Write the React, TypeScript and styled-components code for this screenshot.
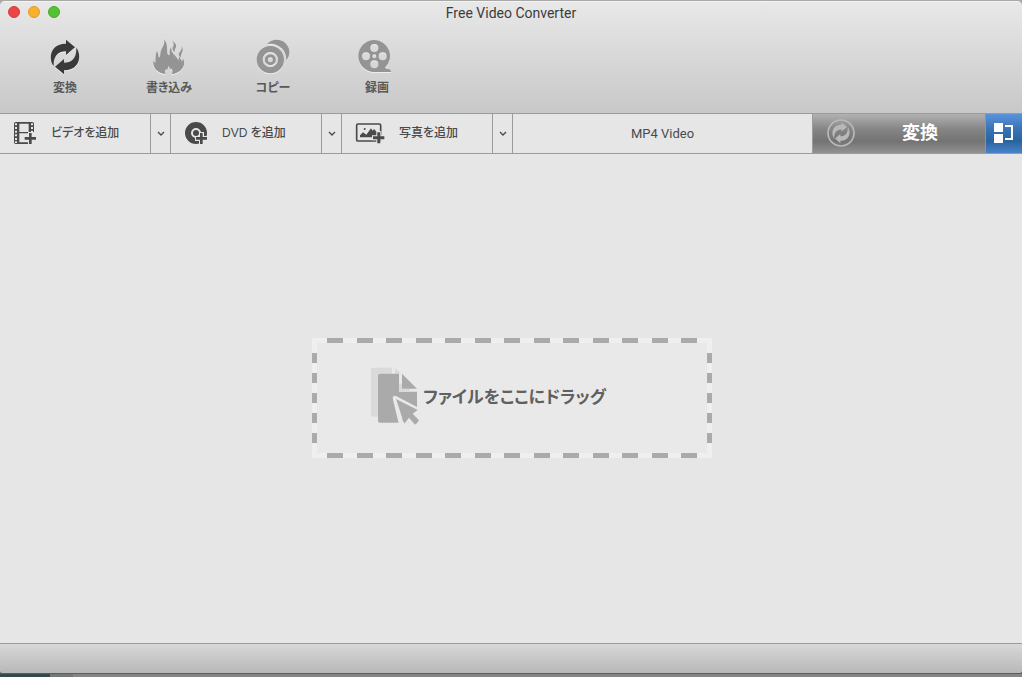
import React from "react";
import styled, { createGlobalStyle, css } from "styled-components";

const line = "#9b9b9b";
const ink = "#4a4a4a";

const GlobalStyle = createGlobalStyle`
  * { box-sizing: border-box; }
  body {
    margin: 0;
    background: #808281;
    color: ${ink};
    font-family: "Liberation Sans", "Noto Sans CJK JP", sans-serif;
    font-feature-settings: "palt";
  }
  button, select { font: inherit; color: inherit; font-feature-settings: inherit; }
  svg { display: block; flex: none; }
`;

const Desktop = styled.div`
  min-height: 100vh;
  display: flex;
  flex-direction: column;
  background: linear-gradient(#a9a9a9, #a9a9a9) top / 100% 4px no-repeat, #808281;
`;

const Window = styled.main`
  flex: 1;
  display: flex;
  flex-direction: column;
  margin-top: 1px;
  border-radius: 5px 5px 4px 4px;
  overflow: hidden;
  background: #e6e6e6;
`;

const DesktopEdge = styled.div`
  height: 4px;
  border-top: 1px solid #5b5e5d;
  background: linear-gradient(90deg, #34494d 50px, #767877 50px, #767877 73px, #858786 73px);
`;

const Header = styled.header`
  background: linear-gradient(#e8e8e8, #c8c8c8);
  border-top: 1px solid #f4f4f4;
  border-bottom: 1px solid ${line};
  height: 113px;
`;

const TitleBar = styled.div`
  display: grid;
  grid-template-columns: 1fr auto 1fr;
  align-items: center;
  height: 20px;
  padding: 0 8px;
`;

const Lights = styled.div`
  display: flex;
  gap: 8px;
`;

const Light = styled.button<{ $fill: string; $edge: string }>`
  width: 12px;
  height: 12px;
  padding: 0;
  border: 1px solid ${(p) => p.$edge};
  border-radius: 50%;
  background: ${(p) => p.$fill};
`;

const Title = styled.h1`
  margin: 0;
  padding-top: 2px;
  font-size: 14px;
  line-height: 18px;
  font-weight: 400;
  color: #3c3c3c;
  font-family: Roboto, sans-serif;
`;

const Modes = styled.nav`
  display: flex;
  padding: 17px 13px 0;
`;

const Mode = styled.button<{ $active?: boolean }>`
  display: flex;
  flex-direction: column;
  align-items: center;
  gap: 3px;
  width: 104px;
  padding: 0;
  border: 0;
  background: none;
  font-size: 12px;
  line-height: 20px;
  font-weight: 700;
  color: #585858;
  svg {
    color: ${(p) => (p.$active ? "#3a3a3a" : "#949494")};
    filter: drop-shadow(0 1px 0 #eeeeee);
  }
`;

const Toolbar = styled.div`
  display: flex;
  height: 40px;
  border-bottom: 1px solid ${line};
`;

const AddButton = styled.button`
  display: flex;
  align-items: center;
  gap: 14px;
  width: 151px;
  padding: 0 14px 2px 13px;
  border: 0;
  border-right: 1px solid ${line};
  background: none;
  font-size: 12px;
  line-height: 18px;
  font-weight: 500;
`;

const CaretButton = styled.button`
  display: grid;
  place-items: center;
  width: 20px;
  padding: 0;
  border: 0;
  border-right: 1px solid ${line};
  background: none;
`;

const FormatButton = styled.button`
  flex: 1;
  border: 0;
  border-right: 1px solid ${line};
  background: none;
  font-size: 13px;
  font-family: Roboto, sans-serif;
`;

const ConvertButton = styled.button`
  display: grid;
  grid-template-columns: 28px 1fr;
  align-items: center;
  width: 173px;
  padding: 0 0 2px 14px;
  border: 0;
  border-right: 1px solid #8f9397;
  background: linear-gradient(#b2b2b2, #868686 38%, #737373 70%, #929292);
  color: #fff;
  font-size: 18px;
  line-height: 24px;
  font-weight: 700;
`;

const PanelButton = styled.button`
  display: grid;
  place-items: center;
  width: 36px;
  padding: 0 0 2px;
  border: 0;
  background: linear-gradient(#5a93dc, #3a74b4 38%, #2a649f 70%, #4a82c8);
`;

const Stage = styled.section`
  flex: 1;
  display: grid;
  place-items: center;
  padding: 0 0 2px 2px;
`;

const DropZone = styled.div`
  display: grid;
  grid-template: 5px 1fr 5px / 5px 1fr 5px;
  width: 400px;
  height: 120px;
  background: #efefef;
`;

const DashLine = styled.div<{ $vertical?: boolean }>`
  display: flex;
  justify-content: space-between;
  ${(p) =>
    p.$vertical
      ? css`
          flex-direction: column;
          padding: 10px 0;
        `
      : css`
          grid-column: 1 / -1;
          padding: 0 15px;
        `}
`;

const Dash = styled.i<{ $vertical?: boolean }>`
  background: #aaa;
  width: ${(p) => (p.$vertical ? 5 : 16)}px;
  height: ${(p) => (p.$vertical ? 10 : 5)}px;
`;

const DropHint = styled.div`
  display: flex;
  align-items: center;
  gap: 2px;
  padding-left: 54px;
  background: #e9e9e9;
  font-size: 17px;
  line-height: 24px;
  font-weight: 700;
  color: #606060;
  white-space: nowrap;
`;

const StatusBar = styled.footer`
  height: 30px;
  border-top: 1px solid ${line};
  background: linear-gradient(#d8d8d8, #b8b8b8);
`;

const arrow = "M11 82C-5 62-2 14 48 14V2l27 23-27 23V37C25 37 10 50 11 82Z";

const Arrows = () => (
  <svg width="30" height="36" viewBox="0 0 90 108" fill="currentColor" aria-hidden>
    <path d={arrow} />
    <path d={arrow} transform="rotate(180 45 54)" />
  </svg>
);

const Flame = () => (
  <svg width="32" height="36" viewBox="0 0 96 108" fill="currentColor" aria-hidden>
    <path d="M33 1C46 17 41 33 43 43C45 50 49 51 50 45C50 37 49 31 55 24C53 38 60 43 67 51C72 57 74 60 76 64C79 60 77 55 80 51C81 60 85 62 87 68C89 66 88 63 91 60C98 76 90 98 62 105C57 106 56 104 58 99C60 94 56 90 54 88C53 90 53 92 51 93C50 88 49 85 47 81C45 86 43 90 43 95C41 93 40 91 39 90C36 95 34 99 38 105C13 103-1 86 1 66C3 68 5 70 8 71C6 58 9 47 11 36C17 43 15 52 18 56C23 53 21 46 23 39C26 25 37 19 33 1Z" />
    <path d="M56 4C62 10 71 13 69 23C68 31 62 33 67 41C56 34 58 28 61 22C64 15 61 10 56 4Z" />
    <path d="M85 21C93 32 88 38 86 43C84 48 84 51 85 55C75 50 76 44 81 38C86 33 87 28 85 21Z" />
  </svg>
);

const Discs = () => (
  <svg width="34" height="36" viewBox="0 0 102 108" fill="currentColor" aria-hidden>
    <defs>
      <mask id="disc-gap">
        <rect width="102" height="108" fill="#fff" />
        <circle cx="43" cy="62" r="48" fill="#000" />
      </mask>
    </defs>
    <circle cx="62" cy="40" r="38" mask="url(#disc-gap)" />
    <circle cx="43" cy="62" r="32" fill="none" stroke="currentColor" strokeWidth="18" />
    <circle cx="43" cy="62" r="12" fill="none" stroke="currentColor" strokeWidth="9" />
  </svg>
);

const Reel = () => (
  <svg width="34" height="36" viewBox="7 2 102 108" fill="currentColor" overflow="visible" aria-hidden>
    <path
      fillRule="evenodd"
      d="M50 5a48 48 0 0 1 32 83c4 5 10 4 14 5l5 8H50A48 48 0 0 1 50 5ZM50 17a12 12 0 1 0 0 24a12 12 0 1 0 0-24ZM25 42a12 12 0 1 0 0 24a12 12 0 1 0 0-24ZM75 42a12 12 0 1 0 0 24a12 12 0 1 0 0-24ZM50 66a12 12 0 1 0 0 24a12 12 0 1 0 0-24ZM50 48a6 6 0 1 0 0 12a6 6 0 1 0 0-12Z"
    />
  </svg>
);

const FilmAdd = () => (
  <svg width="24" height="24" viewBox="0 0 72 72" fill={ink} aria-hidden>
    <path
      fillRule="evenodd"
      d="M8 3H58Q63 3 63 8V69H8Q3 69 3 64V8Q3 3 8 3ZM6 7V13H12V7ZM6 18V24H12V18ZM6 29V35H12V29ZM6 40V46H12V40ZM6 51V57H12V51ZM6 61V66H12V61ZM19 8V33H47V8ZM19 37V64H47V37ZM54 7V13H60V7ZM54 18V24H60V18ZM54 29V35H60V29Z"
    />
    <path d="M32 45H45V33H66V45H72V72H45V60H32Z" fill="#e6e6e6" />
    <path d="M48 36h8v12h13v8H56v13h-8V56H35v-8h13Z" />
  </svg>
);

const DiscAdd = () => (
  <svg width="24" height="24" viewBox="0 0 72 72" fill={ink} aria-hidden>
    <circle cx="36" cy="36" r="24" fill="none" stroke={ink} strokeWidth="18" />
    <circle cx="36" cy="36" r="9" />
    <path d="M45 33H60V45H72V60H60V72H45V60H33V45H45Z" fill="#e6e6e6" />
    <path d="M48 36h8v12h13v8H56v13h-8V56H36v-8h12Z" />
  </svg>
);

const PictureAdd = () => (
  <svg width="30" height="24" viewBox="0 0 90 72" fill={ink} aria-hidden>
    <rect x="5" y="9" width="72" height="51" rx="4" fill="none" stroke={ink} strokeWidth="5" />
    <circle cx="29" cy="24" r="3" />
    <path d="M15 49V43L24 34L34 41L48 22L53 29L57 24L66 34V49Z" />
    <path d="M51 43H64V31H79V43H90V58H79V70H64V58H51Z" fill="#e6e6e6" />
    <path d="M67 34h9v12h12v9H76v12h-9V55H54v-9h13Z" />
  </svg>
);

const Caret = () => (
  <svg width="8" height="6" viewBox="0 0 8 6" fill="none" stroke={ink} strokeWidth="1.4" aria-hidden>
    <path d="M1 1l3 3 3-3" />
  </svg>
);

const ConvertBadge = () => (
  <svg width="28" height="28" viewBox="0 0 84 84" fill="#b9b9b9" aria-hidden>
    <circle cx="42" cy="42" r="39" fill="none" stroke="#b9b9b9" strokeWidth="5" />
    <g transform="translate(15 9) scale(.6)">
      <path d={arrow} />
      <path d={arrow} transform="rotate(180 45 54)" />
    </g>
  </svg>
);

const PanelIcon = () => (
  <svg width="20" height="20" viewBox="0 0 20 20" aria-hidden>
    <path fill="#fff" d="M0 0h9v9H0ZM0 11h9v9H0ZM11 2h8v15h-8v-2h6V4h-6Z" />
  </svg>
);

const FileDrag = () => (
  <svg width="50" height="60" viewBox="0 7 150 180" fill="#aaa" overflow="visible" aria-hidden>
    <path d="M6 6H63V24H27V153H6Q0 153 0 147V12Q0 6 6 6ZM72 6L90 24H72Z" fill="#dadada" />
    <path d="M27 24H84V78H138V171H27Q21 171 21 165V30Q21 24 27 24Z" />
    <path d="M84 54H93V69H117V78H84Z" fill="#dadada" />
    <path d="M93 24L138 69H93Z" />
    <path d="M72 97L142 134L129 145L150 169L136 184L114 160L99 176L93 185Z" stroke="#e9e9e9" strokeWidth="14" strokeLinejoin="round" />
    <path d="M75 100L140 133L125 144L144 164L132 177L114 156L100 174Z" />
  </svg>
);

const sources = [
  { label: "ビデオを追加", icon: <FilmAdd /> },
  { label: "DVD を追加", icon: <DiscAdd /> },
  { label: "写真を追加", icon: <PictureAdd /> },
];

const dashes = (count: number, vertical = false) =>
  Array.from({ length: count }, (_, i) => <Dash key={i} $vertical={vertical} />);

export default function App() {
  return (
    <Desktop>
      <GlobalStyle />
      <Window>
        <Header>
          <TitleBar>
            <Lights>
              <Light $fill="#ec4545" $edge="#d83a3c" aria-label="閉じる" />
              <Light $fill="#f8b12c" $edge="#e09c24" aria-label="しまう" />
              <Light $fill="#54c234" $edge="#45a82a" aria-label="拡大" />
            </Lights>
            <Title>Free Video Converter</Title>
          </TitleBar>
          <Modes>
            <Mode $active><Arrows />変換</Mode>
            <Mode><Flame />書き込み</Mode>
            <Mode><Discs />コピー</Mode>
            <Mode><Reel />録画</Mode>
          </Modes>
        </Header>
        <Toolbar>
          {sources.map((s) => (
            <React.Fragment key={s.label}>
              <AddButton>{s.icon}{s.label}</AddButton>
              <CaretButton aria-label={`${s.label}のメニュー`}><Caret /></CaretButton>
            </React.Fragment>
          ))}
          <FormatButton>MP4 Video</FormatButton>
          <ConvertButton><ConvertBadge />変換</ConvertButton>
          <PanelButton aria-label="パネル"><PanelIcon /></PanelButton>
        </Toolbar>
        <Stage>
          <DropZone>
            <DashLine>{dashes(13)}</DashLine>
            <DashLine $vertical>{dashes(5, true)}</DashLine>
            <DropHint><FileDrag />ファイルをここにドラッグ</DropHint>
            <DashLine $vertical>{dashes(5, true)}</DashLine>
            <DashLine>{dashes(13)}</DashLine>
          </DropZone>
        </Stage>
        <StatusBar />
      </Window>
      <DesktopEdge />
    </Desktop>
  );
}
